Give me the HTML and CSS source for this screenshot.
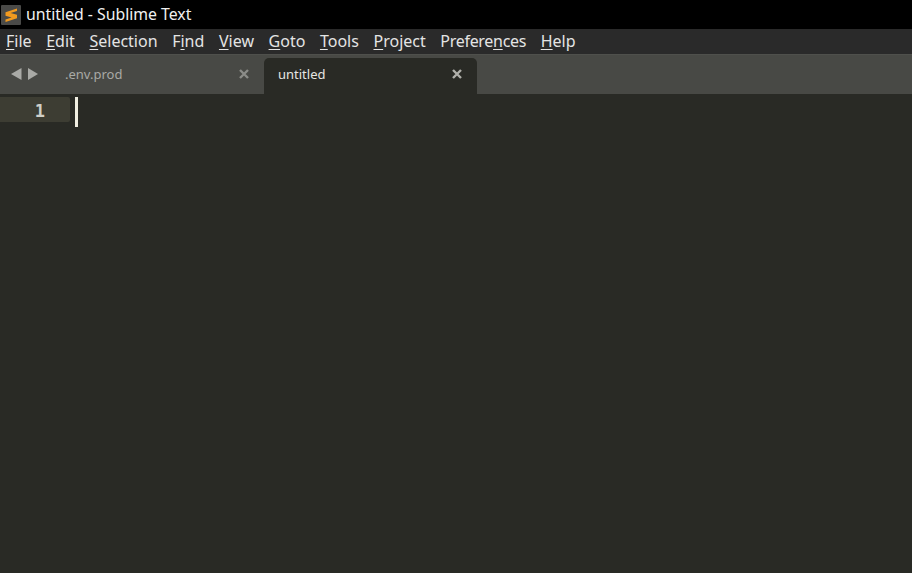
FILE: index.html
```html
<!DOCTYPE html>
<html lang="en">
<head>
<meta charset="utf-8">
<title>untitled - Sublime Text</title>
<link rel="stylesheet" href="styles.css">
</head>
<body>
<div class="window">
  <header class="titlebar">
    <svg class="app-icon" width="20" height="20" viewBox="0 0 20 20" aria-hidden="true">
      <rect width="20" height="20" rx="1" fill="#4a4a48"/>
      <path d="M16 3.5 L4.5 7.2 V10.8 L10.6 12.6 L4.5 14.5 V17 L16 13.3 V9.8 L9.6 8 L16 6 Z" fill="#f29a1f"/>
    </svg>
    <span class="title">untitled - Sublime Text</span>
  </header>
  <nav class="menubar">
    <span class="menu"><u>F</u>ile</span>
    <span class="menu"><u>E</u>dit</span>
    <span class="menu"><u>S</u>election</span>
    <span class="menu">F<u>i</u>nd</span>
    <span class="menu"><u>V</u>iew</span>
    <span class="menu"><u>G</u>oto</span>
    <span class="menu"><u>T</u>ools</span>
    <span class="menu"><u>P</u>roject</span>
    <span class="menu menu-tight">Prefere<u>n</u>ces</span>
    <span class="menu"><u>H</u>elp</span>
  </nav>
  <div class="tabstrip">
    <div class="arrows">
      <svg width="12" height="14" viewBox="0 0 12 14" aria-hidden="true"><path d="M11.5 1 V13 L1 7 Z" fill="#a9aaa6"/></svg>
      <svg width="12" height="14" viewBox="0 0 12 14" aria-hidden="true"><path d="M1 1 V13 L11 7 Z" fill="#a9aaa6"/></svg>
    </div>
    <div class="tab">
      <span class="tab-name">.env.prod</span>
      <svg class="close" width="10" height="10" viewBox="0 0 10 10" aria-hidden="true"><path d="M1 1 L9 9 M9 1 L1 9" stroke="#8b8c88" stroke-width="2.4"/></svg>
    </div>
    <div class="tab tab-active">
      <span class="tab-name">untitled</span>
      <svg class="close" width="10" height="10" viewBox="0 0 10 10" aria-hidden="true"><path d="M1 1 L9 9 M9 1 L1 9" stroke="#b0b0ab" stroke-width="2.4"/></svg>
    </div>
  </div>
  <main class="editor">
    <div class="line">
      <div class="gutter">1</div>
      <div class="caret"></div>
    </div>
  </main>
</div>
</body>
</html>
```
FILE: styles.css
```css
* { box-sizing: border-box; }
html, body { margin: 0; height: 100%; }
body { background: #292a25; font-family: "Noto Sans", "Open Sans", sans-serif; overflow: hidden; }
.window { display: flex; flex-direction: column; height: 573px; width: 912px; }
.titlebar {
  height: 29px; background: #000; color: #f0f0f0;
  display: flex; align-items: center; gap: 5px; padding-left: 1px;
  flex: none;
}
.app-icon { flex: none; }
.title { font-size: 15.8px; line-height: 29px; white-space: nowrap; }
.menubar {
  height: 25px; background: #2a2a2a; color: #e4e4e4;
  display: flex; align-items: center; gap: 14.6px; padding-left: 6px;
  font-size: 16px; flex: none;
}
.menu { white-space: nowrap; line-height: 25px; }
.menu-tight { letter-spacing: -0.3px; }
.menu u { text-underline-offset: 2px; text-decoration-thickness: 1px; }
.tabstrip {
  height: 40px; background: #484945; display: flex; align-items: flex-end; flex: none;
  border-top: 1px solid #4f504c;
}
.arrows {
  width: 51px; flex: none; align-self: flex-start; margin-top: 12px;
  display: flex; gap: 5px; padding-left: 10px;
}
.tab {
  height: 36px; width: 213px; flex: none;
  display: flex; align-items: center; justify-content: space-between;
  padding: 0 15px 4px 14px; font-size: 13px; color: #a9aaa5;
  border-radius: 5px 5px 0 0;
}
.tab-active { background: #292a25; color: #e6e6e2; }
.tab-name { white-space: nowrap; }
.close { flex: none; }
.editor { flex: 1; background: #292a25; padding-top: 3px; }
.line { display: flex; height: 30px; }
.gutter {
  width: 70px; height: 25px; background: #3d3d33; color: #cfcfc8;
  font-family: "DejaVu Sans Mono", monospace; font-size: 17px; font-weight: 700;
  line-height: 28px; text-align: right; padding-right: 25px;
  border-radius: 0 2px 2px 0;
}
.caret { width: 3px; height: 30px; background: #f0eee2; margin-left: 5px; }
```
